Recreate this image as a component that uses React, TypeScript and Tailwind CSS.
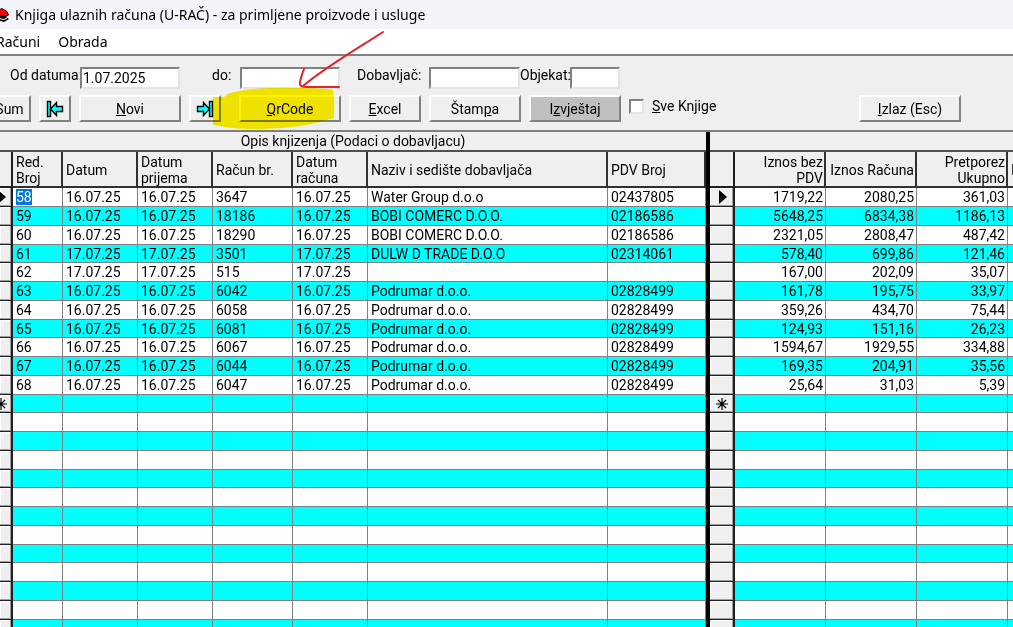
import type { ReactNode } from 'react';

type Column = { label: string; width: string; right?: boolean };

const supplierColumns: Column[] = [
  { label: 'Red. Broj', width: 'w-[50px]' },
  { label: 'Datum', width: 'w-[75px]' },
  { label: 'Datum prijema', width: 'w-[75px]' },
  { label: 'Račun br.', width: 'w-[80px]' },
  { label: 'Datum računa', width: 'w-[75px]' },
  { label: 'Naziv i sedište dobavljača', width: 'w-[240px]' },
  { label: 'PDV Broj', width: 'w-[98px]' },
];

const amountColumns: Column[] = [
  { label: 'Iznos bez PDV', width: 'w-[91px]', right: true },
  { label: 'Iznos Računa', width: 'w-[91px]', right: true },
  { label: 'Pretporez Ukupno', width: 'w-[91px]', right: true },
  { label: 'I', width: 'w-[91px]' },
];

const supplierRows = [
  ['58', '16.07.25', '16.07.25', '3647', '16.07.25', 'Water Group d.o.o', '02437805'],
  ['59', '16.07.25', '16.07.25', '18186', '16.07.25', 'BOBI COMERC D.O.O.', '02186586'],
  ['60', '16.07.25', '16.07.25', '18290', '16.07.25', 'BOBI COMERC D.O.O.', '02186586'],
  ['61', '17.07.25', '17.07.25', '3501', '17.07.25', 'DULW D TRADE D.O.O', '02314061'],
  ['62', '17.07.25', '17.07.25', '515', '17.07.25', '', ''],
  ['63', '16.07.25', '16.07.25', '6042', '16.07.25', 'Podrumar d.o.o.', '02828499'],
  ['64', '16.07.25', '16.07.25', '6058', '16.07.25', 'Podrumar d.o.o.', '02828499'],
  ['65', '16.07.25', '16.07.25', '6081', '16.07.25', 'Podrumar d.o.o.', '02828499'],
  ['66', '16.07.25', '16.07.25', '6067', '16.07.25', 'Podrumar d.o.o.', '02828499'],
  ['67', '16.07.25', '16.07.25', '6044', '16.07.25', 'Podrumar d.o.o.', '02828499'],
  ['68', '16.07.25', '16.07.25', '6047', '16.07.25', 'Podrumar d.o.o.', '02828499'],
];

const amountRows = [
  ['1719,22', '2080,25', '361,03'],
  ['5648,25', '6834,38', '1186,13'],
  ['2321,05', '2808,47', '487,42'],
  ['578,40', '699,86', '121,46'],
  ['167,00', '202,09', '35,07'],
  ['161,78', '195,75', '33,97'],
  ['359,26', '434,70', '75,44'],
  ['124,93', '151,16', '26,23'],
  ['1594,67', '1929,55', '334,88'],
  ['169,35', '204,91', '35,56'],
  ['25,64', '31,03', '5,39'],
];

const VISIBLE_ROWS = 24;

function ToolButton({ children, className, label }: { children: ReactNode; className: string; label?: string }) {
  return (
    <button
      type="button"
      aria-label={label}
      className={`flex h-[27px] shrink-0 items-center justify-center border-2 border-t-white border-l-white border-r-[#808080] border-b-[#808080] ${className}`}
    >
      {children}
    </button>
  );
}

function Field({ id, label, labelClass, inputClass, value = '' }: { id: string; label: string; labelClass: string; inputClass: string; value?: string }) {
  return (
    <div className="flex shrink-0">
      <label htmlFor={id} className={`shrink-0 whitespace-nowrap leading-4 ${labelClass}`}>{label}</label>
      <input
        id={id}
        defaultValue={value}
        className={`h-[22px] shrink-0 border-2 border-t-[#808080] border-l-[#808080] border-r-[#e3e3e3] border-b-[#e3e3e3] bg-white pl-px outline-none ${inputClass}`}
      />
    </div>
  );
}

function JumpIcon({ flip = false }: { flip?: boolean }) {
  return (
    <svg
      width="18"
      height="18"
      viewBox="0 0 18 18"
      fill="#00ffff"
      stroke="#000"
      strokeWidth="1.4"
      className={flip ? '-scale-x-100' : ''}
    >
      <path d="M1.5 1.5H4.5V16.5H1.5Z" />
      <path d="M4.5 9L10.5 2.5V6.5H16.5V11.5H10.5V15.5Z" />
    </svg>
  );
}

function RowMarker({ index, count }: { index: number; count: number }) {
  if (index === 0) {
    return (
      <svg width="8" height="14" viewBox="0 0 8 14" className="ml-[9px] shrink-0">
        <path d="M0 0L8 7L0 14Z" />
      </svg>
    );
  }
  if (index === count) {
    return (
      <svg width="12" height="12" viewBox="0 0 12 12" className="ml-[6px] shrink-0" stroke="#000" strokeWidth="1.2">
        <path d="M6 0V12M0 6H12M2 2L10 10M10 2L2 10" />
      </svg>
    );
  }
  return null;
}

function Grid({ title, columns, rows, selector, clipped }: { title: string; columns: Column[]; rows: string[][]; selector: string; clipped?: boolean }) {
  return (
    <table className="w-full table-fixed border-separate border-spacing-0">
      <colgroup>
        <col className={selector} />
        {columns.map(c => <col key={c.label} className={c.width} />)}
      </colgroup>
      <thead>
        <tr className="h-5">
          <th colSpan={columns.length + 1} className="border-b-2 border-[#505050] p-0 text-center font-normal leading-4">
            {title}
          </th>
        </tr>
        <tr className="h-9">
          <td className="border-r-2 border-b-2 border-[#202020] p-0" />
          {columns.map(c => (
            <th
              key={c.label}
              className={`overflow-hidden border-r-2 border-b-2 border-[#303030] pt-0.5 pb-0 align-middle font-normal leading-4 ${c.right ? 'pr-px text-right' : 'pl-[3px] text-left'}`}
            >
              {c.label}
            </th>
          ))}
        </tr>
      </thead>
      <tbody>
        {Array.from({ length: VISIBLE_ROWS }, (_, i) => (
          <tr key={i} className={`${i % 4 === 3 ? 'h-[18px]' : 'h-[19px]'} ${i % 2 ? 'bg-[#00ffff]' : 'bg-white'}`}>
            <td className="overflow-hidden border-r-2 border-b border-[#202020] bg-[#efefef] p-0 shadow-[inset_-1px_-1px_0_#a0a0a0,inset_1px_1px_0_#fff]">
              <div className={`flex ${clipped ? '-ml-[11px]' : ''}`}>
                <RowMarker index={i} count={rows.length} />
              </div>
            </td>
            {columns.map((c, j) => (
              <td
                key={c.label}
                className={`overflow-hidden border-r border-b border-[#808080] py-0 leading-4 whitespace-nowrap ${c.right ? 'pr-0.5 text-right' : 'pl-[3px]'}`}
              >
                {clipped && i === 0 && j === 0
                  ? <span className="inline-block bg-[#0078d7] text-white">{rows[i][j]}</span>
                  : rows[i]?.[j]}
              </td>
            ))}
          </tr>
        ))}
      </tbody>
    </table>
  );
}

export default function App() {
  return (
    <div className="relative flex h-screen flex-col overflow-hidden bg-[#efefef] font-['Roboto',sans-serif] text-sm text-black">
      {/* Title bar */}
      <header className="flex h-[29px] shrink-0 items-center bg-[#f2f4fa] font-['Noto_Sans',sans-serif]">
        <svg width="16" height="16" viewBox="0 0 16 16" className="-ml-1.5 mr-[5px] shrink-0">
          <path d="M2 4L8 1L13 4L15 8L12 10L15 12L10 15L3 13Z" fill="#000" />
          <path d="M3 4L8 2L12 4L14 8L10 9L4 7Z" fill="#f00" />
          <path d="M5 11.5L10 12.5L13 11" stroke="#fff" fill="none" />
        </svg>
        <h1 className="whitespace-nowrap">Knjiga ulaznih računa (U-RAČ) - za primljene proizvode i usluge</h1>
      </header>

      {/* Menu */}
      <nav className="-ml-1 flex h-[25px] shrink-0 items-center gap-[18px] bg-white font-['Noto_Sans',sans-serif]">
        <button type="button">Računi</button>
        <button type="button">Obrada</button>
      </nav>

      {/* Toolbar */}
      <section className="shrink-0 border-t-2 border-b-2 border-[#808080] pt-[11px] pb-2">
        <div className="flex">
          <Field id="from" label="Od datuma:" labelClass="w-20 pl-2.5" inputClass="w-[100px]" value="1.07.2025" />
          <Field id="to" label="do:" labelClass="w-[60px] pl-8" inputClass="w-[100px]" />
          <Field id="supplier" label="Dobavljač:" labelClass="w-[89px] pl-[17px]" inputClass="w-[91px]" />
          <Field id="object" label="Objekat:" labelClass="w-[50px]" inputClass="w-[50px]" />
        </div>
        <div className="mt-1.5 flex gap-2">
          <ToolButton className="-ml-3 w-[43px]">Sum</ToolButton>
          <ToolButton className="w-8" label="Prvi"><JumpIcon /></ToolButton>
          <ToolButton className="w-[102px]"><u>N</u>ovi</ToolButton>
          <ToolButton className="w-8" label="Zadnji"><JumpIcon flip /></ToolButton>
          <ToolButton className="ml-2.5 w-[102px]"><u>Q</u>rCode</ToolButton>
          <ToolButton className="w-[72px]"><u>E</u>xcel</ToolButton>
          <ToolButton className="w-[92px]">Štam<u>p</u>a</ToolButton>
          <ToolButton className="w-[92px] bg-[#c0c0c0]">I<u>z</u>vještaj</ToolButton>
          <label className="flex h-[22px] shrink-0 items-center gap-2">
            <input
              type="checkbox"
              className="size-[15px] appearance-none border-2 border-t-[#808080] border-l-[#808080] border-r-[#e3e3e3] border-b-[#e3e3e3] bg-white"
            />
            <span><u>S</u>ve Knjige</span>
          </label>
          <ToolButton className="mr-[52px] ml-auto w-[102px]"><u>I</u>zlaz (Esc)</ToolButton>
        </div>
      </section>

      {/* Both halves of the split grid */}
      <main className="flex min-h-0 flex-1 overflow-hidden">
        <div className="w-[706px] shrink-0">
          <Grid title="Opis knjizenja (Podaci o dobavljacu)" columns={supplierColumns} rows={supplierRows} selector="w-[13px]" clipped />
        </div>
        <div className="w-1 shrink-0 bg-black" />
        <div className="min-w-0 flex-1">
          <Grid title="" columns={amountColumns} rows={amountRows} selector="w-[25px]" />
        </div>
      </main>

      {/* Marker strokes over the QrCode button */}
      <svg width="400" height="135" viewBox="0 0 400 135" className="pointer-events-none absolute top-0 left-0 mix-blend-multiply">
        <path d="M213 97H221Q227 97 227 94C240 90 255 88 275 88C300 88 325 88 333 90C335 100 334 110 334 118C325 120 318 123 305 125C285 129 250 130 232 128L213 125Z" fill="#fff200" />
      </svg>
      <svg width="400" height="100" viewBox="0 0 400 100" className="pointer-events-none absolute top-0 left-0">
        <path d="M383 32C360 47 325 67 303 86M304 69C302 75 299 82 300 85Q302 87 306 87H339" fill="none" stroke="#e3242b" strokeWidth="2" strokeLinecap="round" />
      </svg>
    </div>
  );
}
